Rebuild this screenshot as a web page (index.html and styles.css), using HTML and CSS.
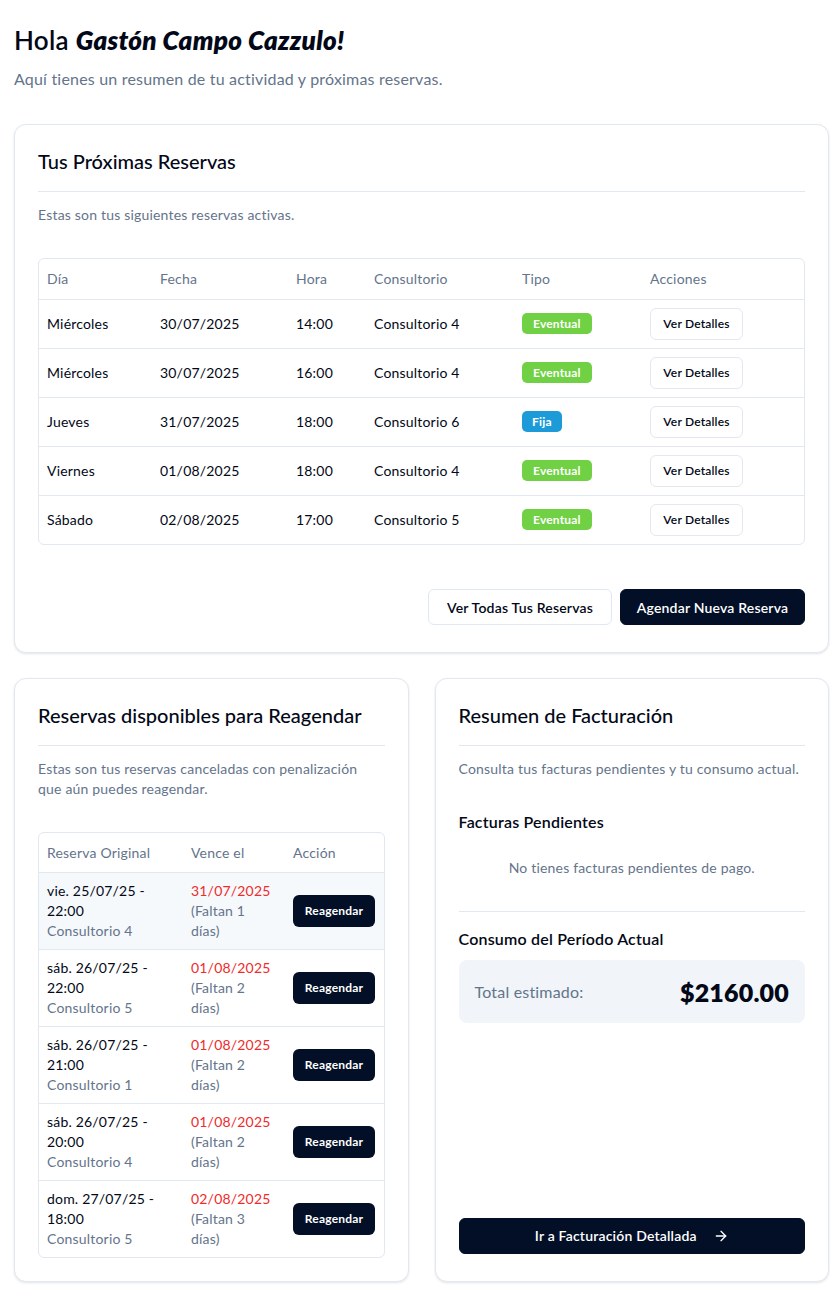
FILE: index.html
```html
<!DOCTYPE html>
<html lang="es">
<head>
<meta charset="utf-8">
<title>Dashboard</title>
<link rel="stylesheet" href="styles.css">
</head>
<body>
<main class="page">
  <header class="intro">
    <h1 class="greet">Hola <em>Gastón Campo Cazzulo!</em></h1>
    <p class="lead">Aquí tienes un resumen de tu actividad y próximas reservas.</p>
  </header>

  <section class="card card-main">
    <h2 class="card-title">Tus Próximas Reservas</h2>
    <p class="card-desc">Estas son tus siguientes reservas activas.</p>
    <div class="table-wrap">
      <table class="tbl tbl-res">
        <colgroup>
          <col class="c1"><col class="c2"><col class="c3"><col class="c4"><col class="c5"><col>
        </colgroup>
        <thead>
          <tr><th>Día</th><th>Fecha</th><th>Hora</th><th>Consultorio</th><th>Tipo</th><th>Acciones</th></tr>
        </thead>
        <tbody>
          <tr><td>Miércoles</td><td>30/07/2025</td><td>14:00</td><td>Consultorio 4</td><td><span class="badge badge-green">Eventual</span></td><td><button class="btn-outline-sm">Ver Detalles</button></td></tr>
          <tr><td>Miércoles</td><td>30/07/2025</td><td>16:00</td><td>Consultorio 4</td><td><span class="badge badge-green">Eventual</span></td><td><button class="btn-outline-sm">Ver Detalles</button></td></tr>
          <tr><td>Jueves</td><td>31/07/2025</td><td>18:00</td><td>Consultorio 6</td><td><span class="badge badge-blue">Fija</span></td><td><button class="btn-outline-sm">Ver Detalles</button></td></tr>
          <tr><td>Viernes</td><td>01/08/2025</td><td>18:00</td><td>Consultorio 4</td><td><span class="badge badge-green">Eventual</span></td><td><button class="btn-outline-sm">Ver Detalles</button></td></tr>
          <tr><td>Sábado</td><td>02/08/2025</td><td>17:00</td><td>Consultorio 5</td><td><span class="badge badge-green">Eventual</span></td><td><button class="btn-outline-sm">Ver Detalles</button></td></tr>
        </tbody>
      </table>
    </div>
    <div class="card-actions">
      <button class="btn btn-outline">Ver Todas Tus Reservas</button>
      <button class="btn btn-dark">Agendar Nueva Reserva</button>
    </div>
  </section>

  <div class="grid-two">
    <section class="card">
      <h2 class="card-title">Reservas disponibles para Reagendar</h2>
      <p class="card-desc card-desc-narrow">Estas son tus reservas canceladas con penalización que aún puedes reagendar.</p>
      <div class="table-wrap">
        <table class="tbl tbl-re">
          <colgroup><col class="r1"><col class="r2"><col></colgroup>
          <thead>
            <tr><th>Reserva Original</th><th>Vence el</th><th>Acción</th></tr>
          </thead>
          <tbody>
            <tr class="hl">
              <td><span class="when">vie. 25/07/25 - 22:00</span><span class="sub">Consultorio 4</span></td>
              <td class="due-cell"><span class="due">31/07/2025</span><span class="sub">(Faltan 1 días)</span></td>
              <td><button class="btn-dark-sm">Reagendar</button></td>
            </tr>
            <tr>
              <td><span class="when">sáb. 26/07/25 - 22:00</span><span class="sub">Consultorio 5</span></td>
              <td class="due-cell"><span class="due">01/08/2025</span><span class="sub">(Faltan 2 días)</span></td>
              <td><button class="btn-dark-sm">Reagendar</button></td>
            </tr>
            <tr>
              <td><span class="when">sáb. 26/07/25 - 21:00</span><span class="sub">Consultorio 1</span></td>
              <td class="due-cell"><span class="due">01/08/2025</span><span class="sub">(Faltan 2 días)</span></td>
              <td><button class="btn-dark-sm">Reagendar</button></td>
            </tr>
            <tr>
              <td><span class="when">sáb. 26/07/25 - 20:00</span><span class="sub">Consultorio 4</span></td>
              <td class="due-cell"><span class="due">01/08/2025</span><span class="sub">(Faltan 2 días)</span></td>
              <td><button class="btn-dark-sm">Reagendar</button></td>
            </tr>
            <tr>
              <td><span class="when">dom. 27/07/25 - 18:00</span><span class="sub">Consultorio 5</span></td>
              <td class="due-cell"><span class="due">02/08/2025</span><span class="sub">(Faltan 3 días)</span></td>
              <td><button class="btn-dark-sm">Reagendar</button></td>
            </tr>
          </tbody>
        </table>
      </div>
    </section>

    <section class="card card-bill">
      <h2 class="card-title">Resumen de Facturación</h2>
      <p class="card-desc">Consulta tus facturas pendientes y tu consumo actual.</p>
      <h3 class="sub-title">Facturas Pendientes</h3>
      <p class="empty">No tienes facturas pendientes de pago.</p>
      <hr class="sep">
      <h3 class="sub-title sub-title-2">Consumo del Período Actual</h3>
      <div class="total-box">
        <span class="total-label">Total estimado:</span>
        <span class="total-value">$2160.00</span>
      </div>
      <button class="btn btn-dark btn-block">Ir a Facturación Detallada
        <svg class="arrow" width="16" height="16" viewBox="0 0 24 24" fill="none" stroke="currentColor" stroke-width="2" stroke-linecap="round" stroke-linejoin="round"><path d="M5 12h14"/><path d="m12 5 7 7-7 7"/></svg>
      </button>
    </section>
  </div>
</main>
</body>
</html>
```

FILE: styles.css
```css
* { box-sizing: border-box; }
html, body { margin: 0; padding: 0; background: #ffffff; }
body {
  font-family: "Lato", "Noto Sans", sans-serif;
  color: #020817;
  letter-spacing: 0.012em;
  -webkit-font-smoothing: antialiased;
}
.page { padding: 24px 10px 18px 14px; }

.greet {
  margin: 0;
  font-size: 26px;
  line-height: 32px;
  font-weight: 600;
  letter-spacing: 0.3px;
}
.greet em { font-weight: 800; font-style: italic; }
.lead {
  margin: 11px 0 0;
  font-size: 16px;
  line-height: 24px;
  color: #64748b;
}

.card {
  background: #fff;
  border: 1px solid #e2e8f0;
  border-radius: 12px;
  box-shadow: 0 1px 3px rgba(15, 23, 42, 0.08), 0 1px 2px rgba(15, 23, 42, 0.04);
  padding: 22px 23px 23px;
}
.card-main { margin-top: 33px; padding-bottom: 27px; }

.card-title {
  margin: 0;
  padding: 0 0 16px;
  font-size: 20px;
  line-height: 28px;
  font-weight: 500;
  letter-spacing: 0;
  border-bottom: 1px solid #e2e8f0;
}
.card-desc {
  margin: 13px 0 0;
  font-size: 14px;
  line-height: 20px;
  color: #64748b;
}
.card-desc-narrow { max-width: 330px; }

.table-wrap {
  margin-top: 33px;
  border: 1px solid #e2e8f0;
  border-radius: 6px;
  overflow: hidden;
}
.tbl { width: 100%; border-collapse: collapse; font-size: 14px; }
.tbl th {
  text-align: left;
  font-weight: 400;
  color: #64748b;
  height: 40px;
  padding: 0 8px;
  vertical-align: middle;
}
.tbl td {
  padding: 0 8px;
  vertical-align: middle;
  border-top: 1px solid #e2e8f0;
}
.tbl-res td { height: 49px; }
.tbl-res .c1 { width: 113px; }
.tbl-res .c2 { width: 136px; }
.tbl-res .c3 { width: 78px; }
.tbl-res .c4 { width: 148px; }
.tbl-res .c5 { width: 128px; }

.badge {
  display: inline-block;
  color: #fff;
  font-size: 12px;
  font-weight: 700;
  line-height: 21px;
  padding: 0 11px;
  border-radius: 5px;
}
.badge-green { background: #6fd143; }
.badge-blue { background: #1d9bd9; padding: 0 10px; }

.btn-outline-sm {
  font-family: inherit;
  letter-spacing: inherit;
  font-size: 12px;
  font-weight: 600;
  color: #020817;
  background: #fff;
  border: 1px solid #e2e8f0;
  border-radius: 6px;
  height: 32px;
  width: 93px;
  padding: 0;
  cursor: pointer;
}

.card-actions {
  display: flex;
  justify-content: flex-end;
  gap: 8px;
  margin-top: 44px;
}
.btn {
  font-family: inherit;
  letter-spacing: inherit;
  font-size: 14px;
  font-weight: 600;
  height: 36px;
  padding: 0 8px;
  border-radius: 6px;
  cursor: pointer;
  display: inline-flex;
  align-items: center;
  justify-content: center;
  white-space: nowrap;
}
.btn-outline { background: #fff; color: #020817; border: 1px solid #e2e8f0; width: 184px; }
.btn-dark { background: #020f26; color: #fff; border: 1px solid #020f26; width: 185px; }

.grid-two {
  display: grid;
  grid-template-columns: 1fr 1fr;
  gap: 26px;
  margin-top: 25px;
}

.tbl-re { table-layout: fixed; }
.tbl-re .r1 { width: 144px; }
.tbl-re .r2 { width: 102px; }
.tbl-re th { height: 39px; }
.tbl-re td { padding: 8px; line-height: 20px; vertical-align: middle; }
.tbl-re td.due-cell { padding-right: 18px; }
.tbl-re tr.hl td { background: #f6f9fc; }
.when { display: block; color: #020817; }
.due { display: block; color: #ef2b2b; }
.sub { display: block; color: #64748b; }
.btn-dark-sm {
  font-family: inherit;
  letter-spacing: inherit;
  font-size: 12px;
  font-weight: 700;
  color: #fff;
  background: #020f26;
  border: none;
  border-radius: 6px;
  height: 32px;
  width: 82px;
  padding: 0;
  cursor: pointer;
}

.card-bill { display: flex; flex-direction: column; }
.sub-title {
  margin: 31px 0 0;
  font-size: 16px;
  line-height: 24px;
  font-weight: 600;
}
.empty {
  margin: 24px 0 0;
  text-align: center;
  font-size: 14px;
  line-height: 20px;
  color: #64748b;
}
.sep { border: 0; border-top: 1px solid #e2e8f0; margin: 33px 0 0; }
.sub-title-2 { margin-top: 15px; }
.total-box {
  margin-top: 9px;
  background: #f1f5f9;
  border-radius: 8px;
  height: 63px;
  padding: 0 16px;
  display: flex;
  align-items: center;
  justify-content: space-between;
}
.total-label { font-size: 16px; color: #64748b; }
.total-value { font-size: 25px; font-weight: 800; }
.btn-block { width: 100%; margin-top: auto; margin-bottom: 4px; gap: 16px; height: 36px; }
.arrow { display: block; }
```
